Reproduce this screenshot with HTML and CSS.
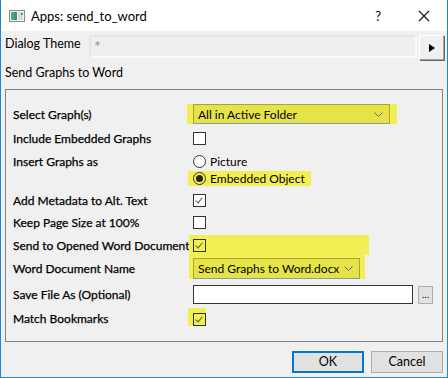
FILE: index.html
```html
<!DOCTYPE html>
<html>
<head>
    <meta charset="utf-8">
    <link rel="stylesheet" href="styles.css">
</head>
<body>
    <div class="window">
        <div class="titlebar">
            <svg class="app-icon" width="16" height="12" viewBox="0 0 16 12">
                <rect x="0.5" y="0.5" width="15" height="11" fill="#f4f4f4" stroke="#8a8a8a"/>
                <rect x="2" y="2" width="6" height="8" fill="#3f8f7a"/>
                <rect x="2" y="2" width="3" height="8" fill="#5aa96f"/>
                <rect x="9" y="2" width="5" height="8" fill="#d8d8d8"/>
                <rect x="12" y="3" width="2" height="2" fill="#4a8ad0"/>
            </svg>
            <span class="title">Apps: send_to_word</span>
            <span class="help">?</span>
            <svg class="close" width="12" height="12" viewBox="0 0 12 12">
                <path d="M1 1 L11 11 M11 1 L1 11" stroke="#111" stroke-width="1.1" fill="none"/>
            </svg>
        </div>

        <div class="body">
            <div class="theme-row">
                <div class="theme-label">Dialog Theme</div>
                <div class="theme-input">*</div>
                <div class="arrow-button">
                    <svg width="8" height="10" viewBox="0 0 8 10"><path d="M1 1 L7 5 L1 9 Z" fill="#000"/></svg>
                </div>
            </div>

            <div class="section-title">Send Graphs to Word</div>

            <div class="group">
                <div class="row row-1">
                    <div class="label">Select Graph(s)</div>
                    <div class="hl hl-combo">
                        <div class="combo combo-wide">
                            <span>All in Active Folder</span>
                            <svg width="9" height="5" viewBox="0 0 9 5"><path d="M0.5 0.5 L4.5 4.5 L8.5 0.5" stroke="#666" fill="none"/></svg>
                        </div>
                    </div>
                </div>

                <div class="row row-2">
                    <div class="label">Include Embedded Graphs</div>
                    <div class="ctl"><span class="check"></span></div>
                </div>

                <div class="row row-3">
                    <div class="label">Insert Graphs as</div>
                    <div class="ctl"><span class="radio"></span><span class="opt">Picture</span></div>
                </div>

                <div class="row row-4">
                    <div class="label"></div>
                    <div class="hl hl-radio"><span class="radio on"></span><span class="opt">Embedded Object</span></div>
                </div>

                <div class="row row-5">
                    <div class="label">Add Metadata to Alt. Text</div>
                    <div class="ctl"><span class="check on"></span></div>
                </div>

                <div class="row row-6">
                    <div class="label">Keep Page Size at 100%</div>
                    <div class="ctl"><span class="check"></span></div>
                </div>

                <div class="row row-7">
                    <div class="label">Send to Opened Word Document</div>
                    <div class="hl hl-block"><span class="check on"></span></div>
                </div>

                <div class="row row-8">
                    <div class="label">Word Document Name</div>
                    <div class="hl hl-block">
                        <div class="combo combo-doc">
                            <span>Send Graphs to Word.docx</span>
                            <svg width="9" height="5" viewBox="0 0 9 5"><path d="M0.5 0.5 L4.5 4.5 L8.5 0.5" stroke="#666" fill="none"/></svg>
                        </div>
                    </div>
                </div>

                <div class="row row-9">
                    <div class="label">Save File As (Optional)</div>
                    <div class="ctl">
                        <div class="text-input"></div>
                        <div class="browse">...</div>
                    </div>
                </div>

                <div class="row row-10">
                    <div class="label">Match Bookmarks</div>
                    <div class="hl hl-check"><span class="check on"></span></div>
                </div>
            </div>

            <div class="footer">
                <div class="btn btn-default">OK</div>
                <div class="btn">Cancel</div>
            </div>
        </div>
    </div>
</body>
</html>
```

FILE: styles.css
```css
body {
    margin: 0;
    font-family: 'Lato', 'Noto Sans', sans-serif;
    font-size: 12px;
    color: #000;
}

.window {
    width: 448px;
    height: 378px;
    box-sizing: border-box;
    border: 1px solid #1c86d9;
    border-top: none;
    background: #f0f0f0;
    overflow: hidden;
    white-space: nowrap;
}

.titlebar {
    height: 31px;
    background: #fff;
    display: flex;
    align-items: center;
    padding-left: 8px;
}

.app-icon {
    margin-right: 6px;
}

.title {
    flex: 1;
    font-size: 13px;
}

.help {
    font-size: 13px;
    margin-right: 37px;
}

.close {
    margin-right: 17px;
}

.body {
    padding: 4px 3px 0 4px;
}

.theme-row {
    display: flex;
    align-items: flex-start;
    height: 25px;
}

.theme-label {
    width: 84px;
    line-height: 18px;
    font-size: 12.5px;
}

.theme-input {
    width: 321px;
    height: 19px;
    border: 2px solid #e6e6e6;
    border-right-color: #fafafa;
    border-bottom-color: #fafafa;
    background: #efefef;
    color: #8a8a8a;
    font-family: 'DejaVu Sans', sans-serif;
    font-size: 11px;
    line-height: 18px;
    padding-left: 4px;
    box-sizing: content-box;
}

.arrow-button {
    width: 23px;
    height: 23px;
    margin-left: 2px;
    border: 1px solid #fff;
    border-right-color: #a0a0a0;
    border-bottom-color: #a0a0a0;
    box-shadow: 1px 1px 0 #696969;
    background: #f0f0f0;
    display: flex;
    align-items: center;
    justify-content: center;
}

.section-title {
    height: 16px;
    line-height: 16px;
    margin: 5px 0 8px 0;
    font-size: 12.5px;
}

.group {
    width: 438px;
    box-sizing: border-box;
    border: 1px solid #828282;
    padding: 14px 0 15px 7px;
}

.row {
    display: flex;
    align-items: center;
    height: 20px;
}

.label {
    width: 175px;
    flex-shrink: 0;
    color: #000;
    -webkit-text-stroke: 0.25px #000;
}

.ctl {
    display: flex;
    align-items: center;
    padding-left: 5px;
}

.hl {
    background: #f2ef55;
    display: flex;
    align-items: center;
    height: 100%;
}

.row-2 { margin-top: 4px; }
.row-3 { margin-top: 3px; }
.row-4 { height: 15px; }
.row-5 { margin-top: 4px; }
.row-6 { margin-top: 2px; }
.row-7 { margin-top: 3px; }
.row-8 { height: 24px; align-items: flex-start; }
.row-8 .label { line-height: 24px; margin-top: 2px; }
.row-9 { margin-top: 5px; height: 21px; }
.row-10 { margin-top: 3px; height: 18px; align-items: flex-start; }
.row-10 .label { line-height: 18px; margin-top: 2px; }

.hl-combo {
    margin-left: -1px;
    padding: 0 7px 0 6px;
}

.hl-radio {
    padding: 0 6px 0 5px;
}

.hl-block {
    width: 176px;
    padding-left: 4px;
    margin-left: 1px;
}

.row-8 .hl-block {
    align-items: flex-start;
    padding-top: 3px;
    box-sizing: border-box;
}

.hl-check {
    width: 18px;
    padding-left: 5px;
    align-items: flex-start;
    padding-top: 5px;
    box-sizing: border-box;
}

.check {
    display: inline-block;
    width: 13px;
    height: 13px;
    box-sizing: border-box;
    border: 1px solid #333;
    background: #fff;
    position: relative;
}

.hl .check {
    background: transparent;
}

.check.on::after {
    content: '';
    position: absolute;
    left: 3px;
    top: 1px;
    width: 3px;
    height: 6px;
    border-right: 1px solid #555;
    border-bottom: 1px solid #555;
    transform: rotate(40deg);
}

.radio {
    display: inline-block;
    width: 13px;
    height: 13px;
    box-sizing: border-box;
    border: 1px solid #333;
    border-radius: 50%;
    background: #fff;
    position: relative;
    margin-right: 4px;
}

.radio.on {
    background: transparent;
}

.radio.on::after {
    content: '';
    position: absolute;
    left: 2px;
    top: 2px;
    width: 7px;
    height: 7px;
    border-radius: 50%;
    background: #222;
}

.combo {
    display: flex;
    align-items: center;
    justify-content: space-between;
    box-sizing: border-box;
    border: 1px solid #a7a53a;
    border-bottom-color: #8f9ba3;
    background: #e5e348;
    padding: 0 6px 0 4px;
}

.combo-wide {
    width: 197px;
    height: 20px;
}

.combo-doc {
    width: 167px;
    height: 21px;
}

.text-input {
    width: 220px;
    height: 19px;
    box-sizing: border-box;
    border: 1px solid #333;
    background: #fff;
}

.browse {
    width: 15px;
    height: 18px;
    margin-left: 5px;
    box-sizing: border-box;
    border: 1px solid #adadad;
    background: #e1e1e1;
    font-size: 10px;
    line-height: 14px;
    text-align: center;
}

.footer {
    display: flex;
    justify-content: flex-end;
    gap: 7px;
    margin-top: 9px;
    padding-right: 1px;
}

.btn {
    width: 72px;
    height: 22px;
    box-sizing: border-box;
    border: 1px solid #adadad;
    background: #e1e1e1;
    text-align: center;
    line-height: 20px;
    font-size: 12.5px;
}

.btn-default {
    border: 2px solid #0078d7;
    line-height: 18px;
}
```
